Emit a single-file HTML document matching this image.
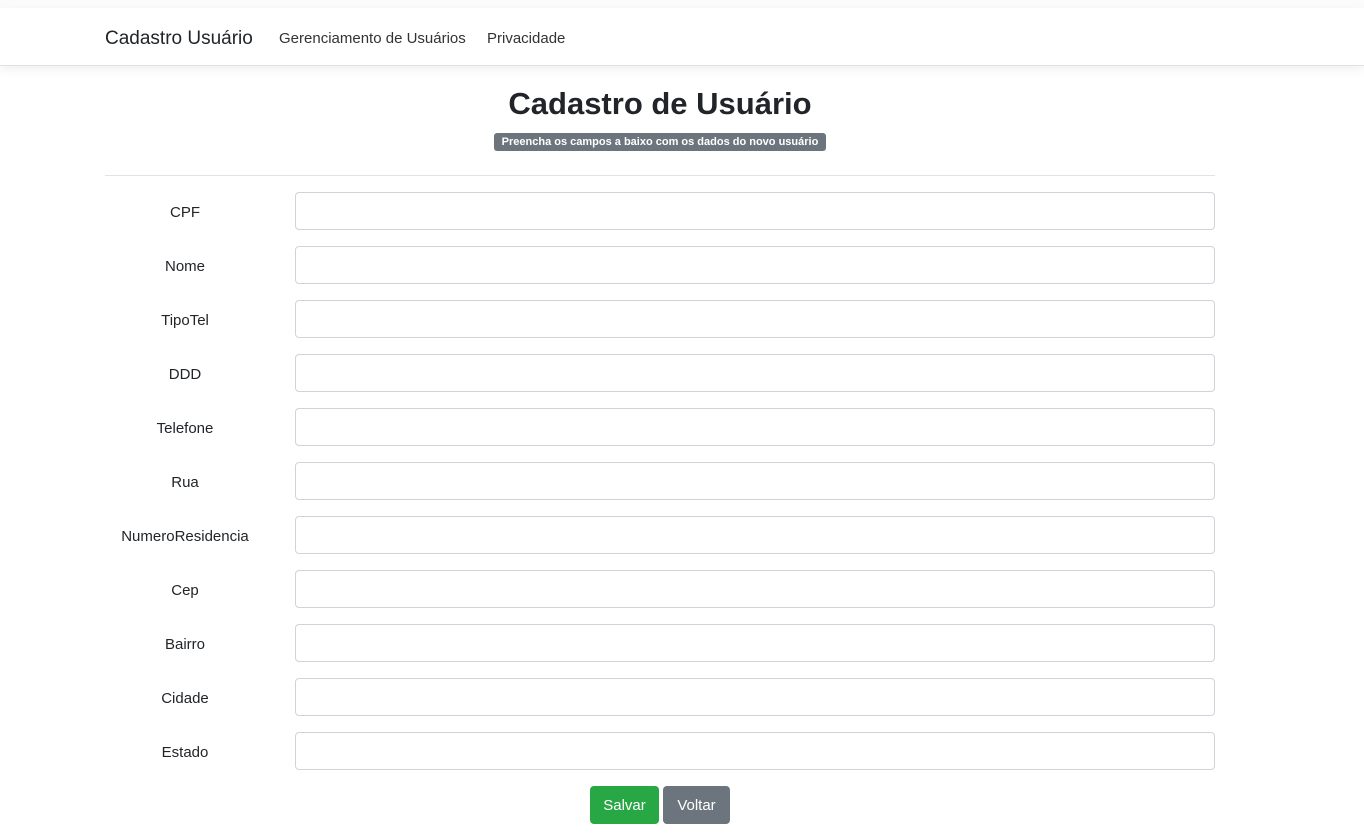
<!DOCTYPE html>
<html><head><meta charset="utf-8"><style>
*{box-sizing:border-box}
body{margin:0;background:#fff;font-family:"Liberation Sans",sans-serif;color:#212529;width:1364px;height:836px;overflow:hidden;position:relative}
.top{position:absolute;left:0;top:0;width:1364px;height:8px;background:#fbfbfb}
.nav{position:absolute;left:0;top:8px;width:1364px;height:58px;background:#fff;border-bottom:1px solid #dee2e6;box-shadow:0 4px 10px rgba(0,0,0,.06)}
.brand{position:absolute;left:105px;top:20px;font-size:19px;color:#212529}
.link{position:absolute;top:22px;font-size:15px;color:#333}
h1{position:absolute;left:0;width:1320px;text-align:center;top:86px;margin:0;font-size:31px;font-weight:bold}
.badge{position:absolute;left:494px;top:133px;width:332px;height:18px;background:#6c757d;color:#fff;border-radius:3px;font-size:11px;font-weight:bold;text-align:center;line-height:18px}
hr{position:absolute;left:105px;top:175px;width:1110px;margin:0;border:0;border-top:1px solid #e3e3e3}
.lbl{position:absolute;left:105px;width:160px;text-align:center;font-size:15px;color:#212529}
.inp{position:absolute;left:295px;width:920px;height:38px;border:1px solid #ced4da;border-radius:4px}
.btn{position:absolute;top:786px;height:38px;border-radius:4px;color:#fff;font-size:15px;line-height:40px;text-align:center}
</style></head><body>
<div class="top"></div>
<div class="nav"><span class="brand">Cadastro Usuário</span><span class="link" style="left:279px">Gerenciamento de Usuários</span><span class="link" style="left:487px">Privacidade</span></div>
<h1>Cadastro de Usuário</h1>
<div class="badge">Preencha os campos a baixo com os dados do novo usuário</div>
<hr>
<div class="lbl" style="top:204px">CPF</div><div class="inp" style="top:192px"></div>
<div class="lbl" style="top:258px">Nome</div><div class="inp" style="top:246px"></div>
<div class="lbl" style="top:312px">TipoTel</div><div class="inp" style="top:300px"></div>
<div class="lbl" style="top:366px">DDD</div><div class="inp" style="top:354px"></div>
<div class="lbl" style="top:420px">Telefone</div><div class="inp" style="top:408px"></div>
<div class="lbl" style="top:474px">Rua</div><div class="inp" style="top:462px"></div>
<div class="lbl" style="top:528px">NumeroResidencia</div><div class="inp" style="top:516px"></div>
<div class="lbl" style="top:582px">Cep</div><div class="inp" style="top:570px"></div>
<div class="lbl" style="top:636px">Bairro</div><div class="inp" style="top:624px"></div>
<div class="lbl" style="top:690px">Cidade</div><div class="inp" style="top:678px"></div>
<div class="lbl" style="top:744px">Estado</div><div class="inp" style="top:732px"></div>
<div class="btn" style="left:590px;width:69px;background:#28a745">Salvar</div>
<div class="btn" style="left:663px;width:67px;background:#6c757d">Voltar</div>
</body></html>
